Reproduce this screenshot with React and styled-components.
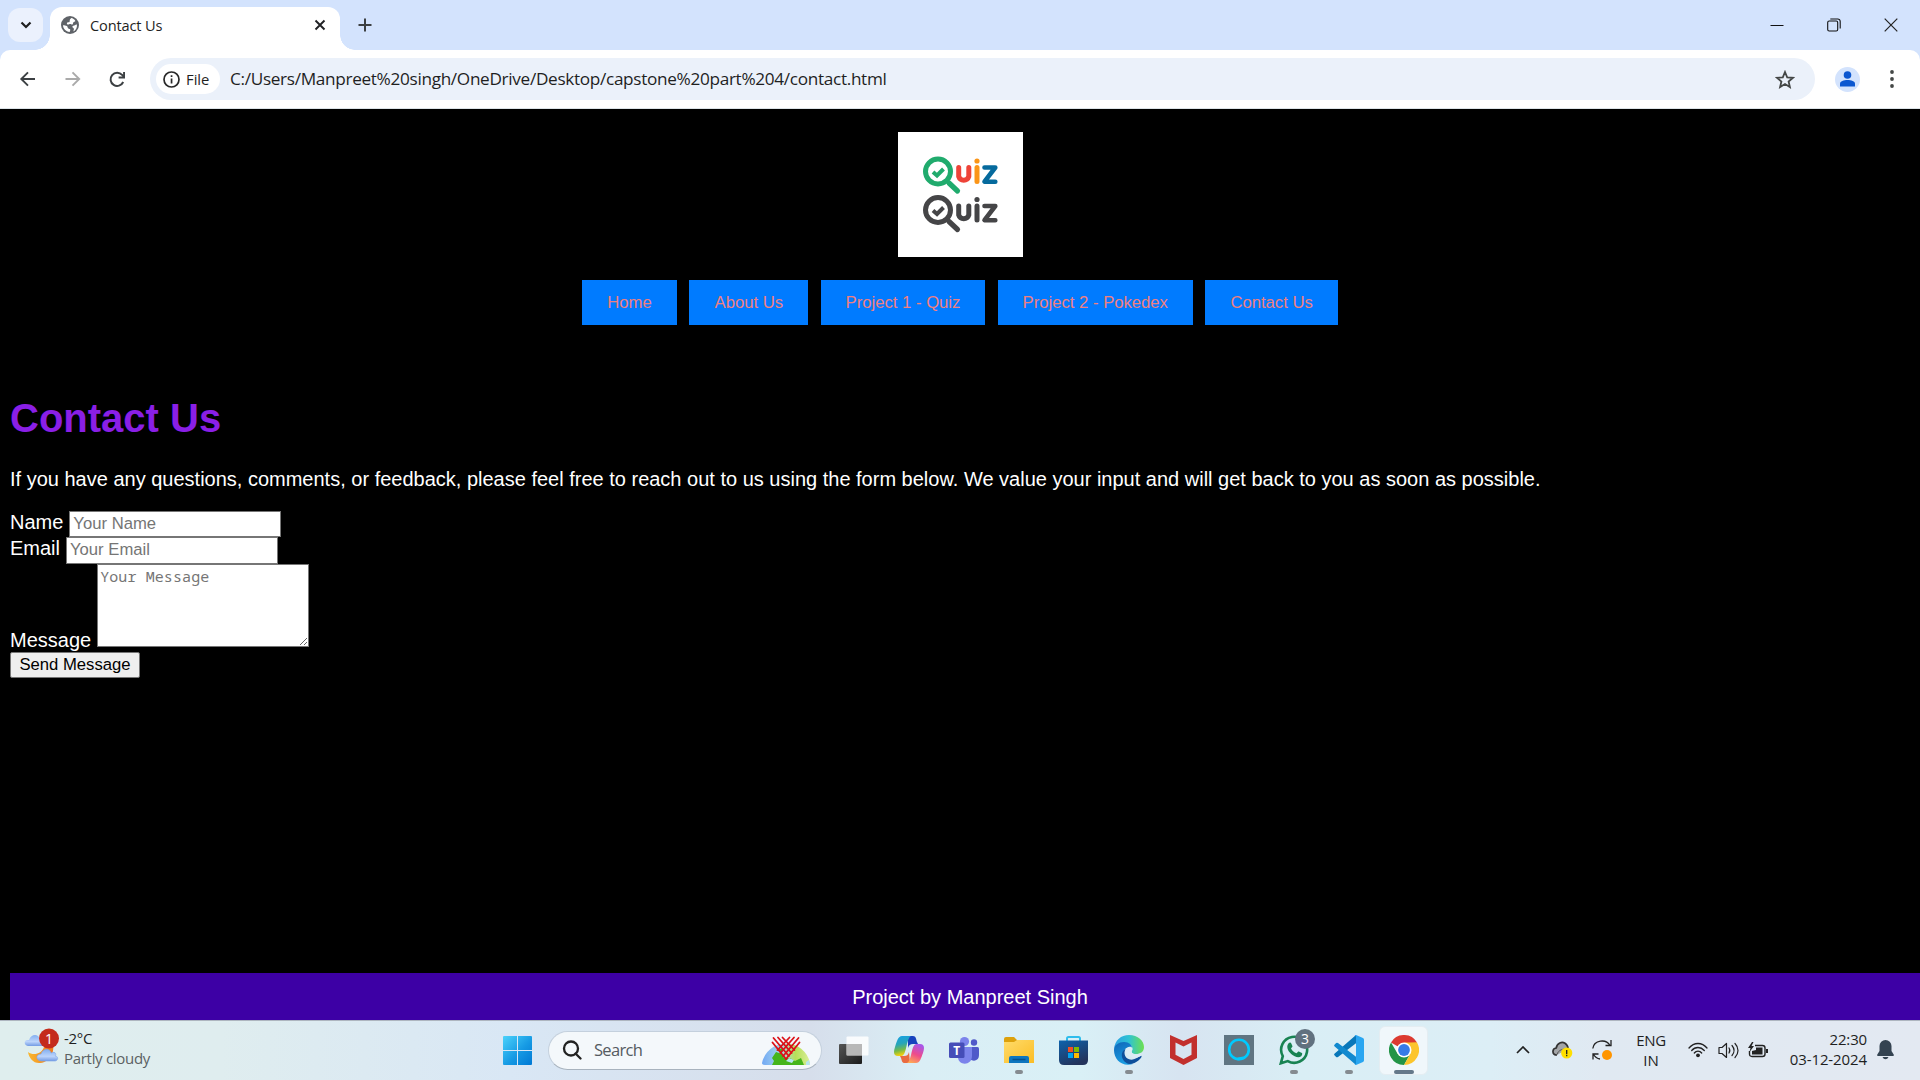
import React from "react";
import styled, { createGlobalStyle } from "styled-components";

const Global = createGlobalStyle`
  * { box-sizing: border-box; }
  html, body { margin: 0; padding: 0; overflow: hidden; background: #000; }
  svg { display: block; flex: none; }
`;
const ui = `"Open Sans", "Noto Sans", sans-serif`;
const arial = `"Liberation Sans", Arial, sans-serif`;

const Screen = styled.div`
  width: 1920px; height: 1080px; display: flex; flex-direction: column; overflow: hidden;
  background: #000; font-family: ${ui};
`;
const Label = styled.span`
  font-size: ${(p) => p.$size}px; line-height: ${(p) => p.$line || 20}px;
  letter-spacing: ${(p) => p.$track || 0}px; color: ${(p) => p.$color || "#1f1f1f"};
  font-weight: ${(p) => p.$weight || 400};
  white-space: nowrap;
`;

/* browser chrome */
const TabStrip = styled.div`
  flex: none; height: 50px; background: #d3e3fd; display: flex; align-items: flex-start; padding-left: 8px;
`;
const TabSearch = styled.div`
  width: 35px; height: 34px; margin-top: 8px; border-radius: 12px; background: #ebf1fd;
  display: flex; align-items: center; justify-content: center;
`;
const Tab = styled.div`
  position: relative; width: 290px; height: 43px; margin: 7px 0 0 7px; background: #fff;
  border-radius: 12px 12px 0 0; display: flex; align-items: flex-start; padding: 9px 14px 0 11px;
  &::before, &::after {
    content: ""; position: absolute; bottom: 0; width: 15px; height: 15px;
  }
  &::before { left: -15px; background: radial-gradient(circle at 0 0, transparent 14.5px, #fff 15px); }
  &::after { right: -15px; background: radial-gradient(circle at 100% 0, transparent 14.5px, #fff 15px); }
`;
const TabTitle = styled(Label)`flex: 1; margin: -1px 0 0 11px;`;
const NewTab = styled.div`margin: 18px 0 0 18px;`;
const WindowButtons = styled.div`
  margin-left: auto; display: flex; height: 49px; align-items: center; gap: 43px; padding-right: 22px;
`;
const ToolbarWrap = styled.div`flex: none; height: 59px; background: #d3e3fd; border-bottom: 1px solid #dce3e8;`;
const Toolbar = styled.div`
  height: 58px; background: #fff; border-radius: 10px 10px 0 0; display: flex; align-items: center;
  padding: 0 22px 0 18px;
`;
const NavIcons = styled.div`display: flex; gap: 25px; width: 132px;`;
const Omnibox = styled.div`
  width: 1665px; height: 42px; border-radius: 21px; background: #ebf1fa; display: flex; align-items: center;
  padding: 0 20px 0 6px;
`;
const FileChip = styled.div`
  width: 64px; height: 30px; border-radius: 15px; background: #fff; display: flex; align-items: center;
  padding-left: 7px; gap: 6px; margin-right: 10px;
`;
const Url = styled(Label)`flex: 1;`;
const Avatar = styled.div`
  width: 25px; height: 25px; border-radius: 50%; background: #d3e3fd; margin: 0 30px 0 20px;
  display: flex; align-items: center; justify-content: center;
`;

/* web page */
const Page = styled.main`
  flex: 1; min-height: 0; background: #000; color: #fff; font-family: ${arial}; font-size: 20px;
  line-height: 23px; display: flex; flex-direction: column; padding-left: 10px;
`;
const Header = styled.header`
  display: flex; flex-direction: column; align-items: center; padding: 23px 10px 0 0; gap: 23px;
`;
const Nav = styled.nav`display: flex; gap: 12.4px;`;
const NavButton = styled.a`
  height: 45px; padding-bottom: 1px; background: #007bff; color: #f08080; font-size: 16.667px;
  display: flex; align-items: center; white-space: nowrap; width: ${(p) => p.$w}px; justify-content: center;
`;
const Title = styled.h1`
  margin: 70px 0 0; font-size: 40px; line-height: 46px; color: #8a1fe6;
`;
const Intro = styled.p`margin: 26px 0 20px; line-height: 24px;`;
const Form = styled.form`display: flex; flex-direction: column; align-items: flex-start;`;
const Field = styled.label`
  display: flex; align-items: ${(p) => (p.$end ? "flex-end" : "flex-start")}; gap: 6px;
  height: ${(p) => p.$h}px;
`;
const Input = styled.input`
  width: 212px; height: ${(p) => p.$h}px; border: 1px solid #767676; padding: 0 3px 1px; background: #fff;
  border-radius: 0; font: 16.667px ${arial}; outline: none; margin: 0;
  &::placeholder { color: #757575; opacity: 1; }
`;
const TextArea = styled.textarea`
  width: 212px; height: 83px; border: 1px solid #767676; padding: 1px 2px; background: #fff; margin: 0 0 5px;
  font: 15px/21px "Noto Sans Mono", "DejaVu Sans Mono", monospace; letter-spacing: 0.1px; outline: none; resize: both;
  &::placeholder { color: #757575; opacity: 1; }
`;
const Send = styled.button`
  width: 130px; height: 26px; padding: 0 0 1px; border: 1px solid #767676; background: #efefef; color: #000;
  font: 16.667px ${arial}; white-space: nowrap; border-radius: 2px;
`;
const Footer = styled.footer`
  margin-top: auto; width: 1920px; height: 47px; background: #3d00a5; text-align: center; line-height: 49px;
`;

/* taskbar */
const Taskbar = styled.div`
  flex: none; height: 60px; border-top: 1px solid #aeb6c0; display: flex; align-items: center;
  background: linear-gradient(90deg, #dfeeee 0, #dfedef 220px, #d9e7f5 510px, #d6deeb 810px, #daeef5 920px, #d9f0f6 1080px, #d7e4f1 1180px, #d9eef5 1300px, #dceef6 1490px, #e0e9f2 1600px, #e3e9f2 1920px);
`;
const Weather = styled.div`display: flex; width: 503px; padding: 0 0 5px 24px; gap: 3px;`;
const Stack = styled.div`
  display: flex; flex-direction: column; align-items: ${(p) => p.$align || "flex-start"};
  padding-bottom: ${(p) => p.$lift || 0}px;
`;
const StartButton = styled.div`padding-bottom: 1px;`;
const SearchBox = styled.div`
  width: 274px; height: 39px; border-radius: 20px; background: #f4f8fb; border: 1px solid #c4d0dd;
  border-bottom-color: #a8b3be; margin: 0 4px 1px 16px; display: flex; align-items: center; padding: 0 10px 0 13px;
`;
const SearchText = styled(Label)`flex: 1; margin-left: 12px;`;
const Slot = styled.div`
  position: relative; width: 55px; height: 59px; display: flex; align-items: center; justify-content: center;
  padding-bottom: 1px;
  &::after {
    content: ""; position: absolute; bottom: 6px; height: 4px; border-radius: 2px;
    width: ${(p) => (p.$active ? 20 : p.$running ? 8 : 0)}px; background: ${(p) => (p.$active ? "#64788a" : "#858b90")};
  }
`;
const ActiveTile = styled.div`
  width: 49px; height: 49px; border-radius: 6px; background: #f0f7fb; border: 1px solid #e4edf2;
  display: flex; align-items: center; justify-content: center;
`;
const Badge = styled.div`
  position: absolute; right: 6px; top: 8px; width: 20px; height: 20px; border-radius: 50%; background: #61717f;
  color: #fff; font-size: 14px; line-height: 20px; text-align: center;
`;
const Tray = styled.div`margin-left: auto; display: flex; align-items: center; padding: 0 26px 1px 0;`;
const TrayItem = styled.div`width: ${(p) => p.$w}px; display: flex; justify-content: center; flex: none;`;
const Clock = styled(TrayItem)`justify-content: flex-end; padding-right: 10px;`;

const Line = ({ w = 20, h = w, d, sw = 2, color = "#3c4043" }) => (
  <svg width={w} height={h} viewBox={`0 0 ${w} ${h}`} fill="none" stroke={color} strokeWidth={sw}>
    <path d={d} />
  </svg>
);

const Globe = () => (
  <svg width="18" height="18" viewBox="0 0 18 18">
    <circle cx="9" cy="9" r="9" fill="#5f6368" />
    <path d="M10.2 2.100c1.700.3 3.300 1.300 4.200 2.900-.6.9-1.500.8-2.100 1.500-.5.6 0 1.600-.8 2-1 .4-1.300-.6-2.300-.6-.8 0-1.300.6-2.200.6-.6 0-1.100-.5-1.100-1.100 0-1 .9-1.200 1.800-1.200.7 0 1-.6 1-1.300 0-1 .6-1.900 1.500-2.800zM2 9.300c1.300.2 2.900.1 3.900.8.9.7.5 1.800 1.400 2.400.6.4 1.500.3 1.900 1 .3.7-.1 1.400-.6 2.400C4.900 15.700 2.100 12.900 2 9.300zM15.900 8.600c.5 3.300-1.200 5.800-3.300 6.800-.3-1.100.5-1.600.3-2.600-.2-.9-1.500-.9-1.500-2 0-1.300 1.700-1.200 2.500-1.600.6-.3 1.100-.8 2-.6z" fill="#fff" />
  </svg>
);
const InfoIcon = () => (
  <svg width="17" height="17" viewBox="0 0 17 17"><circle cx="8.500" cy="8.500" r="7.500" fill="none" stroke="#282828" strokeWidth="1.700" /><path d="M7.700 7.500h1.700v5H7.700zM7.700 4.300h1.700v1.800H7.700z" fill="#282828" /></svg>
);
const Reload = () => (
  <svg width="19" height="20" viewBox="-1 -2 19 20"><path d="M14.200 11A6.600 6.600 0 1 1 13.100 3.900L15 6" fill="none" stroke="#3c4043" strokeWidth="2" /><path d="M16 1v6.500H9.600V5.600h4.500V1z" fill="#3c4043" /></svg>
);
const Restore = () => (
  <svg width="14" height="14" viewBox="0 0 14 14" fill="none" stroke="#111" strokeWidth="1.100"><rect x=".7" y="3" width="10" height="10" rx="1.500" /><path d="M3.300 1h7.500a2.400 2.400 0 0 1 2.400 2.400v7.200" /></svg>
);

const QuizWord = ({ y, colors }) => (
  <g transform={`translate(0 ${y})`}>
    <g fill="none" strokeLinecap="round" strokeLinejoin="round">
      <circle cx="40" cy="39.500" r="12.500" stroke={colors[0]} strokeWidth="5" />
      <path d="M51 51l8.500 8" stroke={colors[0]} strokeWidth="5.200" />
      <path d="M35 40l4 3.500 6.500-6.500" stroke={colors[0]} strokeWidth="4" strokeLinecap="butt" strokeLinejoin="miter" />
      <path d="M60.700 35.500v9a5.300 5.300 0 0 0 10.100 0v-9" stroke={colors[1]} strokeWidth="5" />
      <path d="M79 35.500v14" stroke={colors[2]} strokeWidth="5" />
      <path d="M86.500 35.500h10.800L86.500 49.700h10.800" stroke={colors[3]} strokeWidth="4.600" />
    </g>
    <circle cx="79" cy="29" r="2.600" fill={colors[2]} />
  </g>
);
const QuizLogo = () => (
  <svg width="125" height="125" viewBox="0 0 125 125">
    <rect width="125" height="125" fill="#fff" />
    <QuizWord y={0} colors={["#20ab6d", "#ee4338", "#fb9517", "#056a9d"]} />
    <QuizWord y={38.5} colors={["#454547", "#454547", "#454547", "#454547"]} />
  </svg>
);

const WeatherIcon = () => (
  <svg width="37" height="37" viewBox="0 0 37 37">
    <defs><linearGradient id="cl" x2="0" y2="1"><stop stopColor="#83aff0" /><stop offset=".6" stopColor="#bcd4fb" /><stop offset="1" stopColor="#739be4" /></linearGradient><linearGradient id="mo" x2="1"><stop stopColor="#f9b72f" /><stop offset="1" stopColor="#f07b1d" /></linearGradient></defs>
    <path d="M4 24c5 4 14 2 16-5l9-4c2 12-5 20-14 20-6 0-10-5-11-11z" fill="url(#mo)" />
    <path d="M4 18c-5-1-4-7 1-6 2-6 9-7 11-1 5-1 7 6 2 7z" fill="url(#cl)" />
    <path d="M17 33c-6-1-5-7 0-7 2-6 9-6 10-1 4-2 6 1 4 3 4 0 3 5 0 5z" fill="url(#cl)" stroke="#7ca4ea" strokeWidth=".6" />
    <circle cx="25" cy="10.500" r="10" fill="#c42b1c" />
    <text x="25" y="15.500" fill="#fff" fontFamily="Open Sans" fontSize="14" textAnchor="middle">1</text>
  </svg>
);
const Windows = () => (
  <svg width="29" height="29" viewBox="0 0 29 29">
    <defs><linearGradient id="win" x2="1" y2="1"><stop stopColor="#4cd2fb" /><stop offset=".55" stopColor="#169ae4" /><stop offset="1" stopColor="#0078d4" /></linearGradient></defs>
    <path d="M1 0h13v14H0V1a1 1 0 0 1 1-1zM15 0h13a1 1 0 0 1 1 1v13H15zM0 15h14v14H1a1 1 0 0 1-1-1zM15 15h14v13a1 1 0 0 1-1 1H15z" fill="url(#win)" />
  </svg>
);
const EarthHeart = () => (
  <svg width="49" height="34" viewBox="0 0 49 34">
    <defs><linearGradient id="earth"><stop stopColor="#72a9f4" /><stop offset=".4" stopColor="#a9d9ed" /><stop offset=".7" stopColor="#b7df58" /><stop offset="1" stopColor="#d9ef99" /></linearGradient></defs>
    <path d="M0 30a24.500 24.500 0 0 1 48 0c0 2-2 2-5 2H5c-3 0-5 0-5-2z" fill="url(#earth)" />
    <path d="M14 19l6 2 2 4h6l5 3 6-3 3 7H10l2-4-2-3zM14 17l7-2-1 5z" fill="#45b51b" />
    <path d="M24 28l3-3 5 2-2 3zM44 29l3-2 1 5h-4z" fill="#b7e5ef" />
    <g stroke="#dc1118" strokeWidth="1.800" fill="none" strokeLinecap="round">
      <path d="M10.500 9.500L24 26M11.500 5L26.800 23M16 4.500L29.600 20M20.500 4.500L32.400 17" />
      <path d="M37.500 9.500L24 26M36.500 5L21.200 23M32 4.500L18.400 20M27.500 4.500L15.600 17" />
    </g>
  </svg>
);
const TaskView = () => (
  <svg width="30" height="28" viewBox="0 0 30 28"><defs><linearGradient id="tv" x2="1" y2="1"><stop stopColor="#555" /><stop offset="1" stopColor="#1b1b1b" /></linearGradient></defs><rect y="8" width="23" height="20" rx="1" fill="url(#tv)" /><rect x="7.500" y=".5" width="22" height="19" rx="1" fill="#fff" opacity=".85" /><path d="M7.500 8H23v11.500H7.500z" fill="#aaa" opacity=".75" /></svg>
);
const Copilot = () => (
  <svg width="30" height="28" viewBox="0 0 30 28">
    <defs>
      <linearGradient id="cp1" x2=".2" y2="1"><stop stopColor="#159fe8" /><stop offset=".45" stopColor="#27a5b8" /><stop offset=".75" stopColor="#75ba49" /><stop offset="1" stopColor="#f2d10c" /></linearGradient>
      <linearGradient id="cp2" x1=".6" x2=".2" y2="1"><stop stopColor="#a957e8" /><stop offset=".5" stopColor="#ee4b8b" /><stop offset="1" stopColor="#ffad52" /></linearGradient>
    </defs>
    <path d="M14 0h5c3 0 3 3 4 6l1 2h-5c-3 0-4 1-5 4z" fill="#1742bd" />
    <path d="M16 27h-5c-3 0-3-2-4-5l-1-2h4c3 0 4-1 5-4z" fill="#e96b40" />
    <path d="M8 0h9c-2 1-3 4-4 8-2 9-3 12-6 12H4c-4 0-5-3-3-9C3 5 4 0 8 0z" fill="url(#cp1)" />
    <path d="M22 27h-9c2-1 3-4 4-8 2-9 3-11 6-11h3c4 0 5 3 3 9-2 5-3 10-7 10z" fill="url(#cp2)" />
  </svg>
);
const Teams = () => (
  <svg width="30" height="28" viewBox="0 0 30 28">
    <circle cx="15.500" cy="5.500" r="4.600" fill="#7b83eb" /><circle cx="25" cy="6.500" r="3.200" fill="#5059c9" />
    <path d="M21 11h7.500q1.500 0 1.500 1.500V19c0 6-6 7-9 4z" fill="#5059c9" /><path d="M9 11h14v9c0 10-14 10-14 1z" fill="#7b83eb" />
    <rect y="6.500" width="15.500" height="15.500" rx="1.500" fill="#454db8" />
    <text x="7.700" y="18.700" fill="#fff" fontFamily="Open Sans" fontWeight="700" fontSize="12" textAnchor="middle">T</text>
  </svg>
);
const Explorer = () => (
  <svg width="30" height="27" viewBox="0 0 30 27">
    <defs><linearGradient id="fo" x2="1" y2="1"><stop stopColor="#ffdb6a" /><stop offset="1" stopColor="#fbbd25" /></linearGradient></defs>
    <path d="M0 8V2q0-2 2-2h8l3 3h15q2 0 2 2v3z" fill="#dda10c" /><path d="M0 5h10l3-2h17v23H0z" fill="url(#fo)" />
    <path d="M5 26v-5q0-2 2-2h16q2 0 2 2v5z" fill="#0e76bf" /><path d="M8.500 22.500h13" stroke="#07508c" strokeWidth="1.500" />
  </svg>
);
const Store = () => (
  <svg width="29" height="30" viewBox="0 0 29 30">
    <defs><linearGradient id="st" x2=".5" y2="1"><stop stopColor="#0d63ad" /><stop offset="1" stopColor="#23345c" /></linearGradient></defs>
    <path d="M8 6V3.500Q8 2 9.500 2h10Q21 2 21 3.500V6" stroke="#2fbdec" strokeWidth="2" fill="none" />
    <path d="M0 5.500h29V25q0 5-5 5H5q-5 0-5-5z" fill="url(#st)" />
    <path d="M9 12h5v5H9z" fill="#f25022" /><path d="M15 12h5v5h-5z" fill="#7fba00" /><path d="M9 18h5v5H9z" fill="#00a4ef" /><path d="M15 18h5v5h-5z" fill="#ffb900" />
  </svg>
);
const Edge = () => (
  <svg width="30" height="30" viewBox="0 0 30 30">
    <defs>
      <linearGradient id="e1" x2="1"><stop stopColor="#2b9fe5" /><stop offset=".5" stopColor="#2fc3d2" /><stop offset="1" stopColor="#6ee04e" /></linearGradient>
      <linearGradient id="e2" x2=".4" y2="1"><stop stopColor="#0f66b8" /><stop offset="1" stopColor="#1b9de2" /></linearGradient>
    </defs>
    <path d="M0 14C1 5 7 0 15 0c9 0 15 6 15 12 0 5-4 7-8 7-3 0-5-1-4-3 2-4-2-8-7-8C6 8 2 10 0 14z" fill="url(#e1)" />
    <path d="M0 15C0 10 5 7 10 7c6 0 9 4 8 8-1-3-7-4-8 2-1 6 4 10 9 12C8 32 0 25 0 15z" fill="url(#e2)" />
    <path d="M11.500 14c-3 5 1 13 9 10 4-1 6-4 7-3 1 1-5 8-12 8-7-1-11-11-4-15z" fill="#0d4f9b" />
    <path d="M12 15.500c0-3.500 5-5 6.300-2.300.7 1.600-1 2.400-.7 3.800.7 2.700 6 3.700 10.400 2.500-2 3-6.500 3.700-10 2.700-3.500-1-6-3.200-6-6.700z" fill="#dcecf5" />
  </svg>
);
const McAfee = () => (
  <svg width="27" height="30" viewBox="0 0 27 30"><path d="M0 0l13.500 6L27 0v23l-13.500 7L0 23zM5.500 7.500v12.300l8 4.300 8-4.300V7.500l-8 4z" fill="#c2302d" fillRule="evenodd" /></svg>
);
const Alexa = () => (
  <svg width="30" height="30" viewBox="0 0 30 30"><rect width="30" height="30" fill="#607582" /><circle cx="15" cy="14.500" r="9.800" fill="none" stroke="#00caff" strokeWidth="2.600" /><path d="M13.500 25.500v-3l6-1c-1 3-3.500 4-6 4z" fill="#00caff" /></svg>
);
const WhatsApp = () => (
  <svg width="30" height="30" viewBox="0 0 30 30">
    <path d="M1.800 28.300l2-7.200a13 13 0 1 1 5 5z" fill="none" stroke="#188352" strokeWidth="2.600" />
    <path d="M9.800 8c1-.9 2-.7 2.500.4l1.100 2.500c.2.700-.2 1.100-1.400 2.500 1.400 2.500 3 3.800 5.500 4.800 1.500-1.700 1.700-2 2.400-1.700l3 1.500c.7.400.3 2.200-.7 3.200-2.500 2.200-6.700.7-10-2.200C8.300 15.400 7 11 9.800 8z" fill="#188352" />
  </svg>
);
const VSCode = () => (
  <svg width="30" height="30" viewBox="0 0 30 30">
    <path d="M.7 18.600q-1.200 1 0 2l1.400 1.300q.9.700 1.900 0L22 8.300V0z" fill="#0877b9" />
    <path d="M.7 11.400q-1.200-1 0-2l1.400-1.300q.9-.7 1.900 0l18 13.600V30z" fill="#1189cf" />
    <path d="M22 0l7 3q1 .5 1 1.700v20.600q0 1.200-1 1.700l-7 3q-.8.200-1.500-.5 1.500 0 1.500-1.500V2q0-1.500-1.500-1.500Q21 0 22 0z" fill="#29a6f1" />
  </svg>
);
const Chrome = () => (
  <svg width="30" height="30" viewBox="0 0 30 30">
    <path d="M15 15L2 7.500A15 15 0 0 1 28 7.500z" fill="#dc3a30" /><path d="M2 7.500A15 15 0 0 0 15 30l6.500-11.500L15 15 8.500 18.500z" fill="#239447" />
    <path d="M28 7.500A15 15 0 0 1 15 30l6.500-11.500L21 8z" fill="#fcc52c" /><path d="M15 7.500h13l-7 4z" fill="#fcc52c" />
    <circle cx="15" cy="15" r="7.500" fill="#fff" /><circle cx="15" cy="15" r="5.900" fill="#357be8" />
  </svg>
);
const CloudAlert = () => (
  <svg width="21" height="18" viewBox="0 0 21 18"><path d="M5 14C-.5 14 0 7.500 4.200 7 5 2 10 .3 13 2.300c2.500 1.700 3 3.200 3 5.200" fill="#a3a5a7" stroke="#333" strokeWidth="1.700" /><path d="M5 13.500c1.500-5 6-5.500 10-5.500" fill="none" stroke="#555" strokeWidth="1" /><circle cx="14.700" cy="12" r="5.600" fill="#ffdf00" /><path d="M14.700 9v4M14.700 13.800v1.400" stroke="#222" strokeWidth="1.300" /></svg>
);
const Sync = () => (
  <svg width="20" height="20" viewBox="0 0 20 20"><path d="M.8 8.500C2 0 14 -1.500 18 5.500M19 0v5.500h-5.500M8 19c-3-.5-5-2-6.500-4.500M1 19.500V14h5.500" fill="none" stroke="#222" strokeWidth="1.300" /><circle cx="15" cy="15" r="5" fill="#ff9500" /></svg>
);
const Wifi = () => (
  <svg width="20" height="16" viewBox="0 0 20 16"><g fill="none" stroke="#222" strokeWidth="1.300" strokeLinecap="round"><path d="M1 6C6 0 14 0 19 6M3.700 8.500c3.500-4 9-4 12.600 0M6.300 11c2-2.500 5.400-2.500 7.400 0" /></g><circle cx="10" cy="13.300" r="1.900" fill="#222" /></svg>
);
const Volume = () => (
  <svg width="21" height="17" viewBox="0 0 21 17" fill="none" stroke="#222" strokeWidth="1.200" strokeLinecap="round" strokeLinejoin="round"><path d="M1 5.500h3L8.500 1.500v14L4 11.500H1zM11 6c1 1.500 1 3.500 0 5M14 3.500c2.500 3 2.500 7 0 10M17 1.500c4 4 4 10 0 14" /></svg>
);
const Battery = () => (
  <svg width="20" height="16" viewBox="0 0 20 16"><path d="M7 3.500h7.500q2.500 0 2.500 2.500v6q0 2.500-2.500 2.500H4Q1.500 14.500 1.500 12V9" fill="none" stroke="#222" strokeWidth="1.400" /><path d="M8 5.500h6.500V12.500H4V9l4-1z" fill="#222" /><path d="M18 7h2v4h-2zM4 0L0 6h2.500L1.500 10 6 4H3.500L5.500 0z" fill="#222" /></svg>
);
const Bell = () => (
  <svg width="17" height="20" viewBox="0 0 17 20"><path d="M8.500 0a6 6 0 0 0-6 6v5L.3 14.500q-.6 1.500.7 1.500h15q1.300 0 .7-1.500L14.500 11V6a6 6 0 0 0-6-6zM5.500 17h6q-1 2.300-3 2.300t-3-2.300z" fill="#344351" /></svg>
);

const links = [["Home", 95], ["About Us", 118.8], ["Project 1 - Quiz", 164.8], ["Project 2 - Pokedex", 195], ["Contact Us", 132.8]];
const apps = [[TaskView], [Copilot], [Teams], [Explorer, true], [Store], [Edge, true], [McAfee], [Alexa], [WhatsApp, true, 3], [VSCode, true]];

export default function App() {
  return (
    <Screen>
      <Global />
      <TabStrip>
        <TabSearch><Line w={12} h={8} d="M1.500 1.500L6 6l4.500-4.500" sw={2.2} color="#1f1f1f" /></TabSearch>
        <Tab>
          <Globe />
          <TabTitle $size={14.6} $track={-0.15}>Contact Us</TabTitle>
          <Line w={12} h={18} d="M1.500 4.500l9 9m0-9l-9 9" sw={1.900} color="#202124" />
        </Tab>
        <NewTab><Line w={14} d="M7 .5v13M.5 7h13" sw={2} /></NewTab>
        <WindowButtons>
          <Line w={14} d="M.5 7.500h13" sw={1} color="#111" />
          <Restore />
          <Line w={14} d="M.7 .7l12.600 12.600m0-12.600L.7 13.300" sw={1.2} color="#222" />
        </WindowButtons>
      </TabStrip>
      <ToolbarWrap>
        <Toolbar>
          <NavIcons>
            <Line w={20} d="M17 10H3.500M10 3.300L3.300 10l6.700 6.700" sw={1.900} />
            <Line w={20} d="M2.500 10h13.500M9.500 3.300l6.700 6.700-6.700 6.700" sw={1.900} color="#aaa" />
            <Reload />
          </NavIcons>
          <Omnibox>
            <FileChip><InfoIcon /><Label $size={14.8}>File</Label></FileChip>
            <Url $size={17.2} $line={24} $track={-0.32}>C:/Users/Manpreet%20singh/OneDrive/Desktop/capstone%20part%204/contact.html</Url>
            <Line w={20} h={19} d="M10 2l2.200 5.300 5.700.5-4.300 3.700 1.300 5.600-4.900-3-4.900 3 1.300-5.600L2.100 7.800l5.700-.5z" sw={1.8} color="#444746" />
          </Omnibox>
          <Avatar><svg width="15" height="16" viewBox="0 0 15 16" fill="#0b57d0"><circle cx="7.500" cy="4" r="3.800" /><path d="M0 15.500v-2.700c0-5 15-5 15 0v2.700z" /></svg></Avatar>
          <svg width="4" height="18" viewBox="0 0 4 18" fill="#444746"><circle cx="2" cy="2" r="1.900" /><circle cx="2" cy="9" r="1.900" /><circle cx="2" cy="16" r="1.900" /></svg>
        </Toolbar>
      </ToolbarWrap>

      <Page>
        <Header>
          <QuizLogo />
          <Nav>{links.map(([t, w]) => <NavButton key={t} $w={w}>{t}</NavButton>)}</Nav>
        </Header>
        <Title>Contact Us</Title>
        <Intro>If you have any questions, comments, or feedback, please feel free to reach out to us using the form below. We value your input and will get back to you as soon as possible.</Intro>
        <Form>
          <Field $h={26}>Name <Input $h={26} placeholder="Your Name" /></Field>
          <Field $h={27}>Email <Input $h={27} placeholder="Your Email" /></Field>
          <Field $h={88} $end>Message <TextArea placeholder="Your Message" /></Field>
          <Send type="button">Send Message</Send>
        </Form>
        <Footer>Project by Manpreet Singh</Footer>
      </Page>

      <Taskbar>
        <Weather>
          <WeatherIcon />
          <Stack><Label $size={15} $track={-0.3}>-2°C</Label><Label $size={15} $track={-0.3} $color="#5b6163">Partly cloudy</Label></Stack>
        </Weather>
        <StartButton><Windows /></StartButton>
        <SearchBox>
          <svg width="20" height="20" viewBox="0 0 20 20" fill="none" stroke="#222" strokeWidth="2.300"><circle cx="9" cy="8.500" r="7" /><path d="M13.500 13.500l5 5" strokeLinecap="round" /></svg>
          <SearchText $size={16.5} $line={24} $track={-0.7} $color="#555b61">Search</SearchText>
          <EarthHeart />
        </SearchBox>
        {apps.map(([Icon, running, count], i) => (
          <Slot key={i} $running={running}><Icon />{count && <Badge>{count}</Badge>}</Slot>
        ))}
        <Slot $active><ActiveTile><Chrome /></ActiveTile></Slot>
        <Tray>
          <TrayItem $w={38}><Line w={14} h={8} d="M1 7l6-6 6 6" sw={1.7} color="#222" /></TrayItem>
          <TrayItem $w={40}><CloudAlert /></TrayItem>
          <TrayItem $w={40}><Sync /></TrayItem>
          <TrayItem $w={58}><Stack $align="center" $lift={1}><Label $size={15} $track={-0.3}>ENG</Label><Label $size={15}>IN</Label></Stack></TrayItem>
          <TrayItem $w={36}><Wifi /></TrayItem>
          <TrayItem $w={24}><Volume /></TrayItem>
          <TrayItem $w={35}><Battery /></TrayItem>
          <Clock $w={102}><Stack $align="flex-end" $lift={3}><Label $size={15} $track={-0.15}>22:30</Label><Label $size={15} $track={-0.1}>03-12-2024</Label></Stack></Clock>
          <TrayItem $w={17}><Bell /></TrayItem>
        </Tray>
      </Taskbar>
    </Screen>
  );
}
